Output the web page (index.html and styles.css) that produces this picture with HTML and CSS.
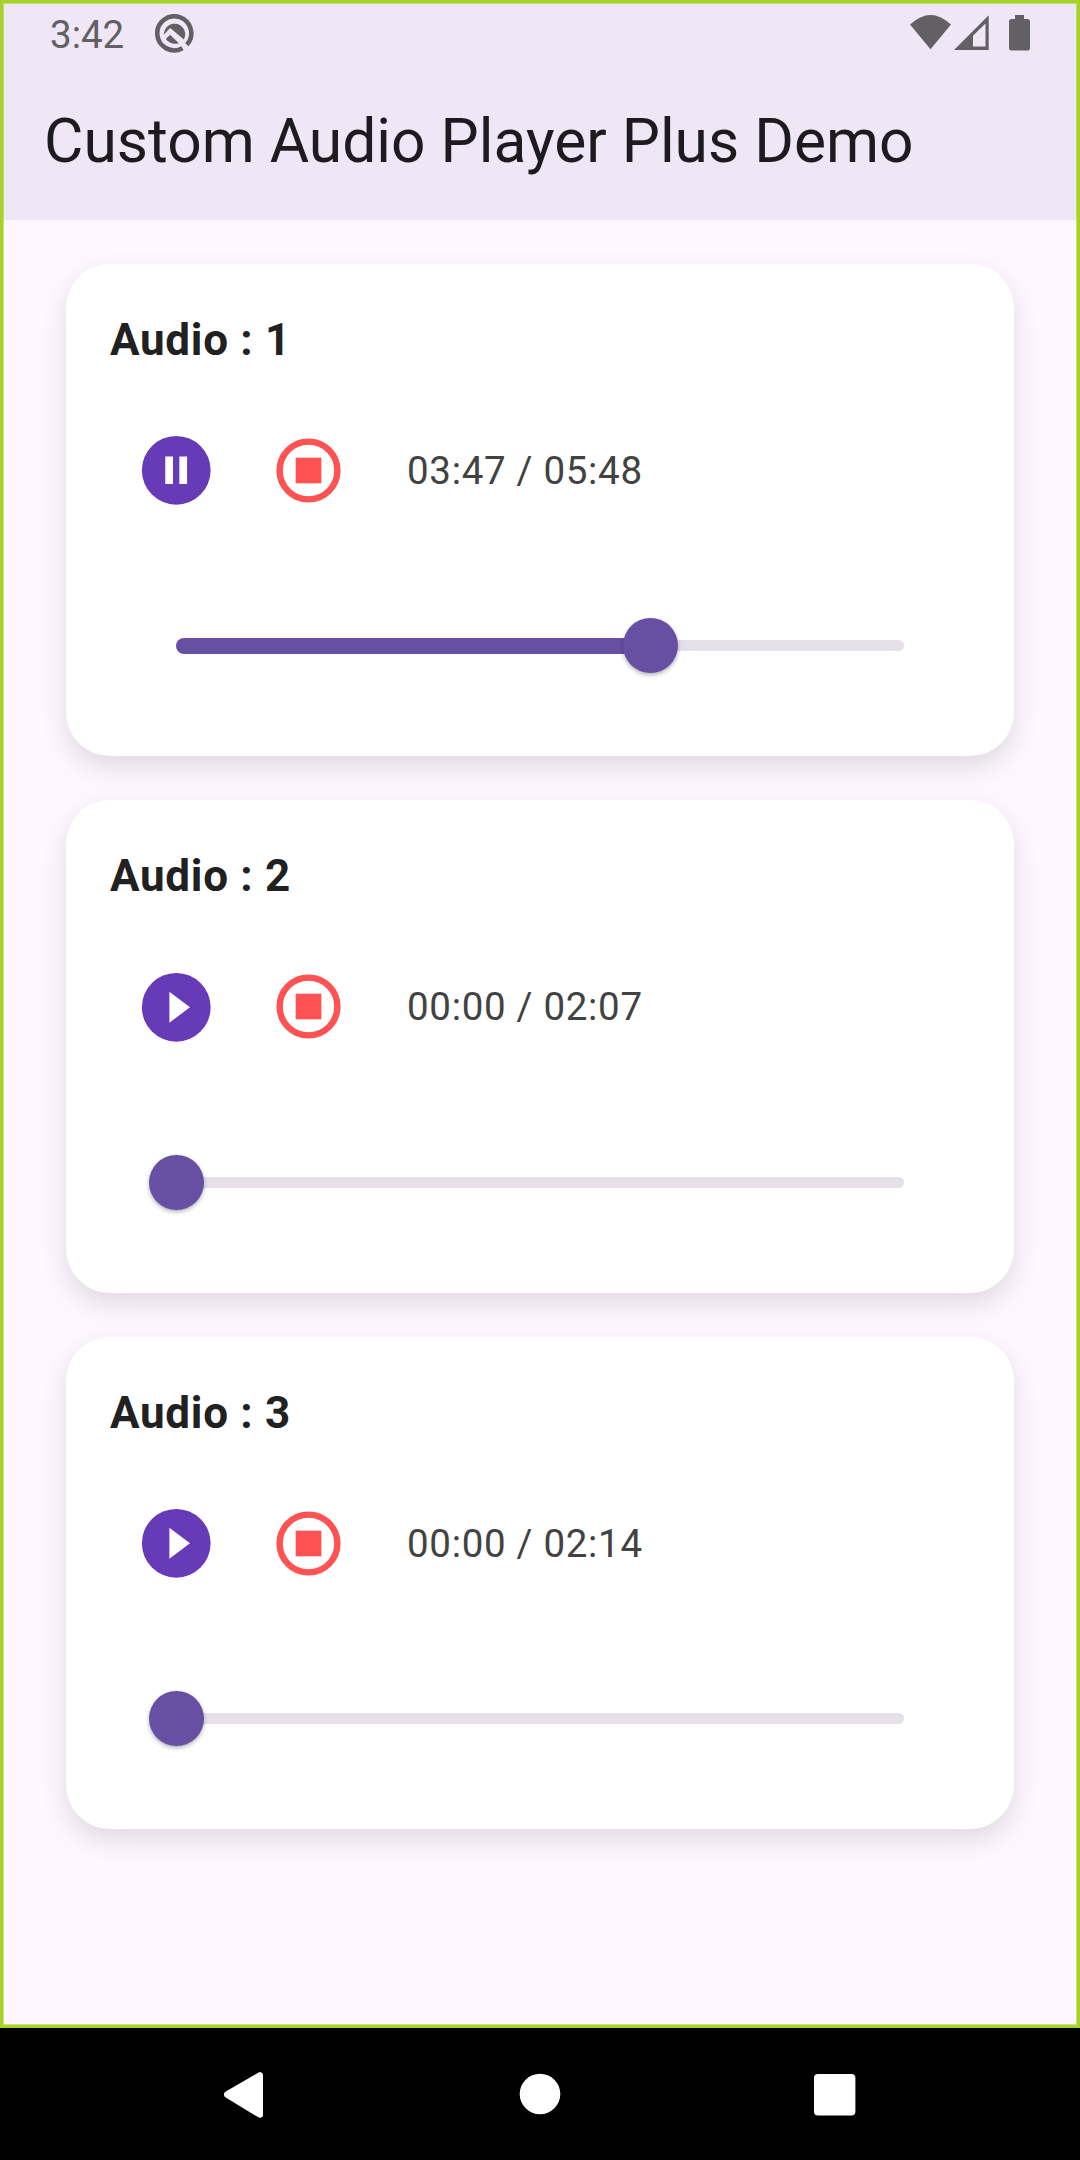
FILE: index.html
```
<!DOCTYPE html>
<html lang="en">
<head>
<meta charset="utf-8">
<title>Custom Audio Player Plus Demo</title>
<link rel="stylesheet" href="styles.css">
</head>
<body>
<div class="screen">
  <header class="app-bar">
    <div class="status-bar">
      <span class="clock">3:42</span>
      <svg class="status-app" viewBox="0 0 39 39">
        <path d="M31.900 30.700A17 17 0 1 0 27.500 34.200" fill="none" stroke="#626065" stroke-width="4.600"/>
        <path d="M9 19.600A10.600 10.600 0 1 1 28.800 25.500L16.200 14.700Q15 13.800 14 14.900L9.400 20.500Z" fill="#626065"/>
        <path d="M10.800 25L15 20.800L23.900 29.200Q15.800 31.500 10.800 25Z" fill="#626065"/>
      </svg>
      <svg class="status-icons" viewBox="0 0 122 38">
        <g fill="#626065">
          <path d="M1 10.500Q21.500 -8.500 42 10.500L21.500 35.300Z"/>
          <path fill-rule="evenodd" d="M79.700 1.200V36H45ZM76.500 9.500L64 21.800V32.500H76.500Z"/>
          <path d="M106 1h9v4h3.500a2.500 2.500 0 0 1 2.500 2.500V34a2.500 2.500 0 0 1-2.500 2.500h-16A2.500 2.500 0 0 1 100 34V7.500A2.500 2.500 0 0 1 102.500 5H106Z"/>
        </g>
      </svg>
    </div>
    <h1 class="app-title">Custom Audio Player Plus Demo</h1>
  </header>
  <main class="player-list">
    <section class="player">
      <h2 class="player-title">Audio : 1</h2>
      <div class="controls">
        <svg class="toggle" viewBox="0 0 24 24"><circle cx="12" cy="12" r="10" fill="#673ab7"/><path d="M8.800 8h2.250v8H8.800zM12.900 8h2.250v8h-2.250z" fill="#fff"/></svg>
        <svg class="stop" viewBox="0 0 24 24"><circle cx="12" cy="12" r="9" fill="none" stroke="#ff5252" stroke-width="2"/><path d="M8 8h8v8H8z" fill="#ff5252"/></svg>
        <span class="time">03:47 / 05:48</span>
      </div>
      <div class="slider"><div class="progress" style="width:65.230%"></div><div class="thumb"></div><div class="rest"></div></div>
    </section>
    <section class="player">
      <h2 class="player-title">Audio : 2</h2>
      <div class="controls">
        <svg class="toggle" viewBox="0 0 24 24"><circle cx="12" cy="12" r="10" fill="#673ab7"/><path d="M10 16.500v-9l6 4.500z" fill="#fff"/></svg>
        <svg class="stop" viewBox="0 0 24 24"><circle cx="12" cy="12" r="9" fill="none" stroke="#ff5252" stroke-width="2"/><path d="M8 8h8v8H8z" fill="#ff5252"/></svg>
        <span class="time">00:00 / 02:07</span>
      </div>
      <div class="slider"><div class="progress" style="width:0%"></div><div class="thumb"></div><div class="rest"></div></div>
    </section>
    <section class="player">
      <h2 class="player-title">Audio : 3</h2>
      <div class="controls">
        <svg class="toggle" viewBox="0 0 24 24"><circle cx="12" cy="12" r="10" fill="#673ab7"/><path d="M10 16.500v-9l6 4.500z" fill="#fff"/></svg>
        <svg class="stop" viewBox="0 0 24 24"><circle cx="12" cy="12" r="9" fill="none" stroke="#ff5252" stroke-width="2"/><path d="M8 8h8v8H8z" fill="#ff5252"/></svg>
        <span class="time">00:00 / 02:14</span>
      </div>
      <div class="slider"><div class="progress" style="width:0%"></div><div class="thumb"></div><div class="rest"></div></div>
    </section>
  </main>
</div>
<nav class="nav-bar">
  <svg class="nav-icon" viewBox="0 0 60 60"><path d="M45 11.200V50.800L12.300 31Q11.500 30.500 12.300 30Z" fill="#fff" stroke="#fff" stroke-width="6" stroke-linejoin="round"/></svg>
  <svg class="nav-icon" viewBox="0 0 60 60"><circle cx="30" cy="30" r="20.300" fill="#fff"/></svg>
  <svg class="nav-icon" viewBox="0 0 60 60"><rect x="9" y="10" width="41.400" height="41.400" rx="4" fill="#fff"/></svg>
</nav>
</body>
</html>
```
FILE: styles.css
```
* { box-sizing: border-box; }

body {
  margin: 0;
  width: 1080px;
  height: 2160px;
  display: flex;
  flex-direction: column;
  background: #000;
  font-family: Roboto, sans-serif;
}

.screen {
  position: relative;
  height: 2028px;
  background: #fef7ff;
}

/* debug frame drawn above the whole app surface */
.screen::after {
  content: "";
  position: absolute;
  inset: 0;
  border: 3px solid #a6d32a;
  box-shadow: inset 0 0 0 1px rgba(166, 211, 42, 0.6);
}

.app-bar {
  height: 220px;
  background: #efe7f6;
}

.status-bar {
  height: 66px;
  padding: 0 49px 0 50px;
  display: flex;
  align-items: flex-start;
}

.clock {
  width: 105px;
  margin-top: 12px;
  font-size: 38.5px;
  line-height: 46px;
  color: #626065;
}

.status-app {
  width: 39px;
  height: 39px;
  margin-top: 13.7px;
}

.status-icons {
  width: 122px;
  height: 38px;
  margin: 14.4px 0 0 auto;
}

.app-title {
  margin: 0;
  padding: 40px 44px 0;
  font-size: 60.5px;
  font-weight: 400;
  line-height: 72px;
  color: #1d1b20;
}

.player-list {
  display: flex;
  flex-direction: column;
  gap: 44px;
  padding: 44px 66px;
}

.player {
  height: 492.25px;
  padding: 45px 44px 43px;
  border-radius: 44px;
  background: #fff;
  box-shadow: 0 11px 28px rgba(0, 0, 0, 0.12);
}

.player-title {
  margin: 0;
  font-size: 44px;
  font-weight: 700;
  line-height: 62px;
  letter-spacing: 0.7px;
  color: #212121;
}

.controls {
  display: flex;
  align-items: center;
  height: 132px;
  margin-top: 33.5px;
  padding-left: 24.75px;
}

.toggle {
  width: 82.5px;
  height: 82.5px;
}

.stop {
  width: 77px;
  height: 77px;
  margin-left: 52.25px;
}

.time {
  margin-left: 60.5px;
  font-size: 38.5px;
  line-height: 55px;
  letter-spacing: 0.69px;
  color: #424242;
}

.slider {
  display: flex;
  align-items: center;
  height: 132px;
  margin-top: 43.25px;
  padding: 0 66px;
}

.progress {
  height: 16.5px;
  border-radius: 8.25px 0 0 8.25px;
  background: #6750a4;
}

.thumb {
  flex: none;
  z-index: 1;
  width: 55px;
  height: 55px;
  margin: 0 -27.5px;
  border-radius: 50%;
  background: #6750a4;
  box-shadow: 0 2px 4px rgba(0, 0, 0, 0.3);
}

.rest {
  flex: 1;
  height: 11px;
  border-radius: 0 5.5px 5.5px 0;
  background: #e6e0e9;
}

.nav-bar {
  display: flex;
  justify-content: center;
  align-items: center;
  gap: 235px;
  height: 132px;
  background: #000;
}

.nav-icon {
  width: 60px;
  height: 60px;
}
```
